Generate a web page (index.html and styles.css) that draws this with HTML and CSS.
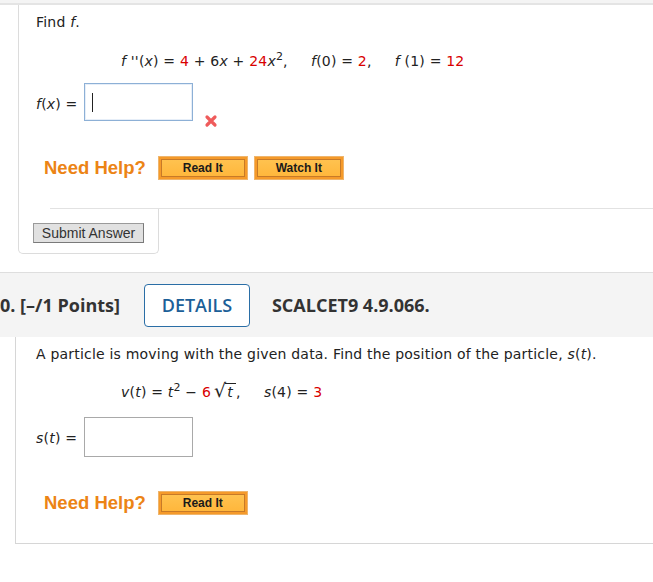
FILE: index.html
```html
<!DOCTYPE html>
<html>
<head>
<meta charset="utf-8">
<link rel="stylesheet" href="styles.css">
</head>
<body>
<div class="topstrip"></div>

<div class="q1">
  <div class="q1-body">
    <p class="text">Find <i>f</i>.</p>
    <p class="math"><i>f</i> ''(<i>x</i>) = <span class="red">4</span> + 6<i>x</i> + <span class="red">24</span><i>x</i><sup>2</sup>,&nbsp;&nbsp;&nbsp;&nbsp; <i>f</i>(0) = <span class="red">2</span>,&nbsp;&nbsp;&nbsp;&nbsp; <i>f</i> (1) = <span class="red">12</span></p>
    <div class="answer-row">
      <span class="label"><i>f</i>(<i>x</i>) =</span>
      <div class="input focused"><span class="caret"></span></div>
      <svg class="wrong" width="14" height="14" viewBox="0 0 14 14"><path d="M3 3 L11 11 M11 3 L3 11" stroke="#ef5b5b" stroke-width="3.2" stroke-linecap="round"/></svg>
    </div>
    <div class="help-row">
      <span class="need-help">Need Help?</span>
      <span class="help-btn"><span class="help-inner">Read It</span></span>
      <span class="help-btn"><span class="help-inner">Watch It</span></span>
    </div>
    <div class="rule"></div>
  </div>
  <div class="submit-tab">
    <span class="submit-btn">Submit Answer</span>
  </div>
</div>

<div class="q2-head">
  <span class="points">0. [–/1 Points]</span>
  <span class="details">DETAILS</span>
  <span class="code">SCALCET9 4.9.066.</span>
</div>

<div class="q2-body">
  <p class="text">A particle is moving with the given data. Find the position of the particle, <i>s</i>(<i>t</i>).</p>
  <p class="math"><i>v</i>(<i>t</i>) = <i>t</i><sup>2</sup> − <span class="red">6</span><span class="sqrt"><span class="radical">√</span><span class="radicand"><i>t</i></span></span>,&nbsp;&nbsp;&nbsp;&nbsp; <i>s</i>(4) = <span class="red">3</span></p>
  <div class="answer-row">
    <span class="label"><i>s</i>(<i>t</i>) =</span>
    <div class="input plain"></div>
  </div>
  <div class="help-row">
    <span class="need-help">Need Help?</span>
    <span class="help-btn"><span class="help-inner">Read It</span></span>
  </div>
</div>
</body>
</html>
```

FILE: styles.css
```css
* { box-sizing: border-box; }
body {
  margin: 0;
  background: #fff;
  font-family: "DejaVu Sans", Verdana, sans-serif;
  font-size: 14px;
  letter-spacing: 0.2px;
  color: #222;
}
p { margin: 0; }
i { font-style: italic; }
.red { color: #d90000; }
sup { font-size: 11px; line-height: 0; vertical-align: 6px; }

.topstrip {
  height: 5px;
  background: #f4f4f4;
  border-bottom: 2px solid #e4e4e4;
}

.q1 { margin-left: 18px; }
.q1-body {
  border-left: 1px solid #dcdcdc;
  padding: 9px 0 0 17px;
}
.text { line-height: 16px; }
.math {
  line-height: 16px;
  margin-top: 23px;
  padding-left: 85px;
}
.answer-row {
  display: flex;
  align-items: flex-start;
  margin-top: 14px;
}
.label {
  line-height: 16px;
  margin-top: 13px;
  width: 48px;
}
.input {
  width: 109px;
  height: 38px;
  background: #fff;
  border: 1px solid #a9a9a9;
  padding: 9px 0 0 7px;
}
.input.focused { border: 1px solid #8db0d6; box-shadow: 0 0 0 1px #e6eef8 inset; }
.caret { display: block; width: 1px; height: 19px; background: #222; }
.wrong { margin: 31px 0 0 11px; }

.help-row {
  display: flex;
  align-items: center;
  margin-top: 28px;
  padding-left: 8px;
  letter-spacing: 0;
}
.need-help {
  font-family: "Liberation Sans", Arial, sans-serif;
  font-weight: bold;
  font-size: 18.5px;
  color: #ec8415;
  margin-right: 12px;
}
.help-btn {
  display: inline-block;
  width: 90px;
  height: 24px;
  border: 1px solid #efb56c;
  background: #f59a2a;
  padding: 2px;
  margin-right: 6px;
}
.help-inner {
  display: block;
  height: 18px;
  border: 1px solid #c77a28;
  background: linear-gradient(#ffc24f, #ffb73c);
  font-family: "Liberation Sans", Arial, sans-serif;
  font-weight: bold;
  font-size: 12px;
  line-height: 16px;
  text-align: center;
  color: #1a1a1a;
}
.rule {
  height: 1px;
  background: #e2e2e2;
  margin: 28px 0 0 14px;
}
.submit-tab {
  width: 141px;
  height: 45px;
  border: 1px solid #dcdcdc;
  border-top: none;
  border-radius: 0 0 5px 5px;
  padding: 14px 0 0 14px;
}
.submit-btn {
  display: inline-block;
  width: 111px;
  height: 20px;
  background: #e1e1e1;
  border: 1px solid #9a9a9a;
  border-right-color: #7a7a7a;
  border-bottom-color: #7a7a7a;
  font-family: "Liberation Sans", Arial, sans-serif;
  font-size: 14px;
  letter-spacing: 0;
  line-height: 18px;
  text-align: center;
  color: #333;
}

.q2-head {
  margin-top: 18px;
  height: 65px;
  background: #f4f4f4;
  border-top: 1px solid #dedede;
  display: flex;
  align-items: center;
  font-family: "Open Sans", sans-serif;
  font-weight: bold;
  font-size: 18px;
  letter-spacing: 0;
  color: #333;
}
.points { margin-left: 0; }
.details {
  margin-left: 24px;
  width: 106px;
  height: 43px;
  border: 1px solid #2a6ea6;
  border-radius: 4px;
  background: #fff;
  color: #1c5f98;
  font-weight: 600;
  display: flex;
  align-items: center;
  justify-content: center;
}
.code { margin-left: 22px; }

.q2-body {
  margin-left: 15px;
  border-left: 1px solid #d6d6d6;
  border-bottom: 1px solid #d6d6d6;
  padding: 9px 0 28px 20px;
}
.q2-body .math { margin-top: 20px; line-height: 16px; }
.q2-body .answer-row { margin-top: 17px; }
.q2-body .input { height: 40px; }
.q2-body .label { margin-top: 13px; }
.q2-body .help-row { margin-top: 34px; }
.q2-body .help-btn { margin-right: 0; }

.sqrt { display: inline-block; margin-left: 3px; }
.radical { font-size: 19px; line-height: 16px; }
.radicand {
  border-top: 1px solid #222;
  padding: 0 3px 0 2px;
  margin-left: -1px;
}
```
